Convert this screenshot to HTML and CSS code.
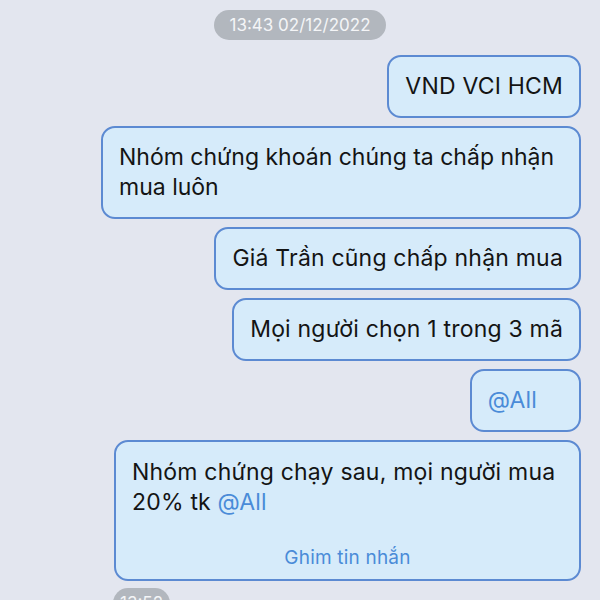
FILE: index.html
```html
<!DOCTYPE html>
<html lang="vi">
<head>
  <meta charset="UTF-8" />
  <title>Chat</title>
  <meta name="viewport" content="width=device-width, initial-scale=1" />
  <link rel="stylesheet" href="styles.css">
</head>
<body>
  <div class="chat">
    <div class="time-pill">13:43 02/12/2022</div>
    <div class="message">VND VCI HCM</div>
    <div class="message wide">Nhóm chứng khoán chúng ta chấp nhận mua luôn</div>
    <div class="message">Giá Trần cũng chấp nhận mua</div>
    <div class="message">Mọi người chọn 1 trong 3 mã</div>
    <div class="message tag-only"><span class="mention">@All</span></div>
    <div class="message pinned">
      <div>Nhóm chứng chạy sau, mọi người mua 20% tk <span class="mention">@All</span></div>
      <div class="pin-action">Ghim tin nhắn</div>
    </div>
    <div class="time-pill small">13:52</div>
  </div>
</body>
</html>
```

FILE: styles.css
```css
body {
  margin: 0;
  background: #e3e6ef;
  font-family: Inter, 'Liberation Sans', Arial, sans-serif;
  height: 600px;
  overflow: hidden;
}
.chat {
  display: flex;
  flex-direction: column;
  align-items: flex-end;
  gap: 8px;
  padding: 10px 19px 0 0;
}
.time-pill {
  align-self: center;
  margin-left: 19px;
  background: #b2b7be;
  color: #f4f5f7;
  font-size: 17px;
  line-height: 30px;
  height: 30px;
  padding: 0 15px;
  border-radius: 15px;
  margin-bottom: 7px;
}
.time-pill.small {
  align-self: flex-start;
  margin: -1px 0 0 113px;
  padding: 0 7px;
}
.message {
  background: #d6ebfa;
  border: 2px solid #5c8ad2;
  border-radius: 14px;
  padding: 14px 16px 15px;
  font-size: 23px;
  letter-spacing: 0.2px;
  line-height: 30px;
  color: #141414;
}
.message.wide {
  width: 444px;
  letter-spacing: 0;
}
.message.tag-only {
  padding-right: 42px;
}
.message.pinned {
  width: 431px;
  padding: 15px 16px 8px;
}
.mention {
  color: #4a8bd8;
}
.pin-action {
  margin-top: 28px;
  text-align: center;
  color: #4a8bd8;
  font-size: 19px;
  line-height: 26px;
}
```
